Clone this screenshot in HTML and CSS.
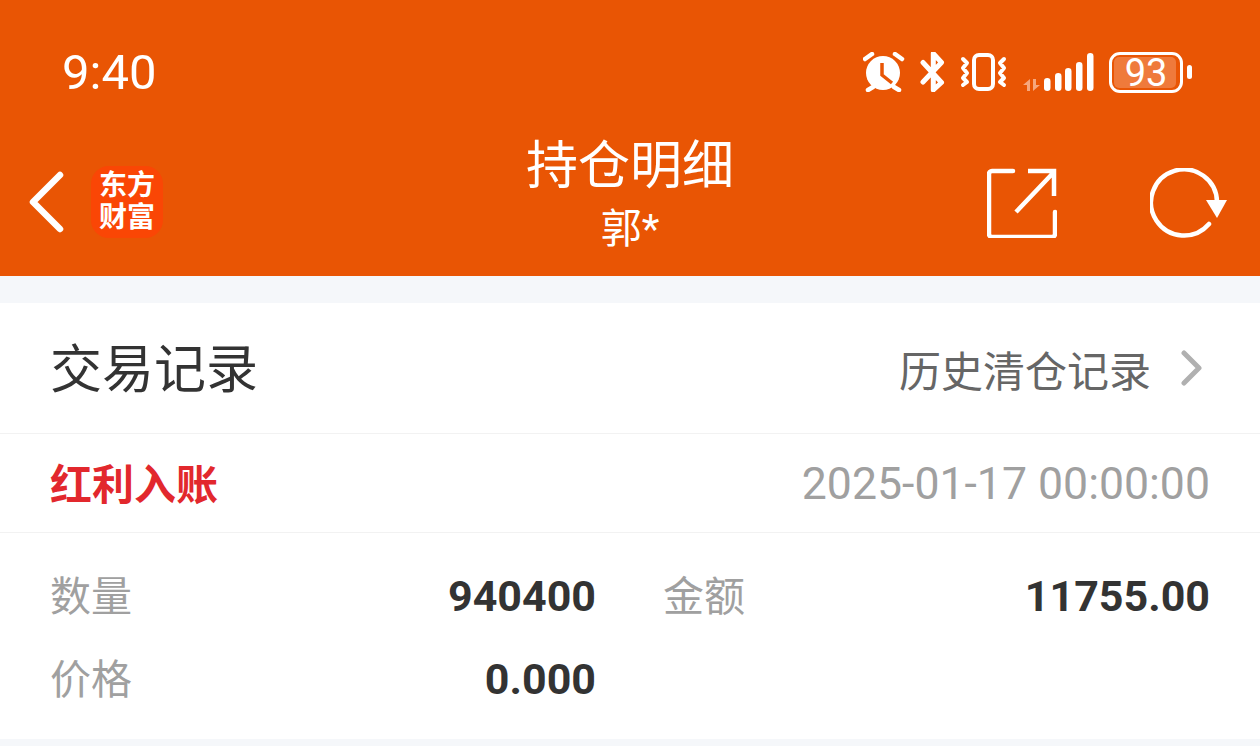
FILE: index.html
```html
<!DOCTYPE html>
<html lang="zh-CN">
<head>
  <meta charset="UTF-8" />
  <meta name="viewport" content="width=device-width, initial-scale=1.0"/>
  <title>持仓明细</title>
  <link rel="stylesheet" href="styles.css">
</head>
<body>
  <header class="top">
    <div class="status-bar">
      <span class="clock">9:40</span>
      <div class="status-icons">
        <!-- alarm -->
        <svg width="42" height="40" viewBox="0 0 42 40">
          <circle cx="20" cy="21" r="17" fill="#fff"/>
          <path d="M19 11v12l10 8" fill="none" stroke="#e95504" stroke-width="3.5"/>
          <path d="M2 7l7-5M32 2l7 5M5 38l5-3M31 35l5 3" fill="none" stroke="#fff" stroke-width="4.5" stroke-linecap="round"/>
        </svg>
        <!-- bluetooth -->
        <svg class="ic-bt" width="26" height="40" viewBox="0 0 26 40">
          <path d="M4 10.500 22.500 30.500 14.300 38V1.500L22.500 10.500 4 30" fill="none" stroke="#fff" stroke-width="5" stroke-linejoin="round" stroke-linecap="round"/>
        </svg>
        <!-- vibrate -->
        <svg class="ic-vib" width="48" height="40" viewBox="0 0 48 40">
          <rect x="14" y="3" width="19" height="34" rx="5" fill="none" stroke="#fff" stroke-width="4"/>
          <path d="M3 7l4 4-4 5 4 5-4 5 4 4-4 3M44 7l-4 4 4 5-4 5 4 5-4 4 4 3" fill="none" stroke="#fff" stroke-width="4" stroke-linejoin="round" stroke-linecap="round"/>
        </svg>
        <!-- signal -->
        <svg class="ic-signal" width="72" height="40" viewBox="0 0 72 40">
          <path d="M1 33 8 27V39H5V33zM11 27h3v6h4l-7 6z" fill="#f6a77d"/>
          <rect x="22" y="26" width="6.500" height="13" rx="3.200" fill="#fff"/>
          <rect x="33" y="21" width="6.500" height="18" rx="3.200" fill="#fff"/>
          <rect x="43" y="16" width="6.500" height="23" rx="3.200" fill="#fff"/>
          <rect x="54" y="10" width="6.500" height="29" rx="3.200" fill="#fff"/>
          <rect x="65" y="1" width="6.500" height="38" rx="3.200" fill="#fff"/>
        </svg>
        <div class="battery">
          <div class="battery-body">
            <div class="battery-fill"></div>
            <span class="battery-num">93</span>
          </div>
          <div class="battery-tip"></div>
        </div>
      </div>
    </div>
    <div class="nav">
      <div class="nav-left">
        <svg width="38" height="62" viewBox="0 0 38 62">
          <path d="M33 4 6 31l27 27" fill="none" stroke="#fff" stroke-width="6.500" stroke-linecap="round" stroke-linejoin="round"/>
        </svg>
        <div class="logo">东方<br>财富</div>
      </div>
      <div class="nav-title">
        <div class="title">持仓明细</div>
        <div class="subtitle">郭*</div>
      </div>
      <div class="nav-right">
        <svg width="70" height="70" viewBox="0 0 70 70">
          <path d="M26 3H5a3 3 0 0 0-3 3v60a3 3 0 0 0 3 3h60a3 3 0 0 0 3-3V44" fill="none" stroke="#fff" stroke-width="4.500" stroke-linecap="round"/>
          <path d="M41 3h26v25M67 4 29 44" fill="none" stroke="#fff" stroke-width="4.500"/>
        </svg>
        <svg width="78" height="70" viewBox="0 0 78 70">
          <path d="M59 56A33 33 0 1 1 67 34" fill="none" stroke="#fff" stroke-width="4.500" stroke-linecap="round"/>
          <path d="M56 32h21L67 50z" fill="#fff"/>
        </svg>
      </div>
    </div>
  </header>

  <div class="gap-top"></div>

  <main class="card">
    <div class="card-head">
      <span class="card-title">交易记录</span>
      <span class="history">
        历史清仓记录
        <svg width="22" height="36" viewBox="0 0 22 36">
          <path d="M3 3l15 15L3 33" fill="none" stroke="#b0b0b0" stroke-width="5" stroke-linecap="round" stroke-linejoin="round"/>
        </svg>
      </span>
    </div>
    <div class="record-head">
      <span class="record-type">红利入账</span>
      <span class="record-time">2025-01-17 00:00:00</span>
    </div>
    <div class="record-body">
      <div class="field"><span class="label">数量</span><span class="value">940400</span></div>
      <div class="field"><span class="label">金额</span><span class="value">11755.00</span></div>
      <div class="field"><span class="label">价格</span><span class="value">0.000</span></div>
    </div>
  </main>

  <div class="gap-bottom"></div>
</body>
</html>
```

FILE: styles.css
```css
/* Basic resets & layout */
html, body {
  margin: 0;
  padding: 0;
  background: #fff;
}

body {
  font-family: Roboto, "Noto Sans CJK SC", sans-serif;
  color: #333;
  height: 753px;
  overflow: hidden;
}

.top {
  background: #e95504;
  color: #fff;
  height: 276px;
  box-sizing: border-box;
}

.status-bar {
  height: 130px;
  padding: 14px 68px 0 62px;
  box-sizing: border-box;
  display: flex;
  align-items: center;
  justify-content: space-between;
}

.clock {
  font-size: 49px;
  line-height: 1;
}

.status-icons {
  display: flex;
  align-items: center;
}

.ic-bt { margin-left: 14px; }
.ic-vib { margin-left: 15px; }
.ic-signal { margin-left: 14px; }

.battery {
  display: flex;
  align-items: center;
  margin-left: 15px;
}

.battery-body {
  position: relative;
  width: 74px;
  height: 41px;
  box-sizing: border-box;
  border: 3.5px solid #fff;
  border-radius: 11px;
  display: flex;
  align-items: center;
  justify-content: center;
}

.battery-fill {
  position: absolute;
  left: 2px;
  top: 2px;
  bottom: 2px;
  right: 4px;
  border-radius: 5px;
  background: #ef7a3b;
}

.battery-num {
  position: relative;
  font-size: 38px;
  line-height: 32px;
  padding-top: 2px;
}

.battery-tip {
  width: 5px;
  height: 14px;
  margin-left: 4px;
  background: #fff;
  border-radius: 3px;
}

.nav {
  height: 146px;
  position: relative;
  display: flex;
  align-items: flex-start;
  justify-content: space-between;
}

.nav-left {
  display: flex;
  align-items: center;
  padding: 36px 0 0 27px;
}

.logo {
  width: 72px;
  height: 72px;
  margin-left: 26px;
  border-radius: 18px;
  background: #fa4605;
  font-size: 28px;
  font-weight: 700;
  line-height: 32px;
  text-align: center;
  padding-top: 4px;
  box-sizing: border-box;
}

.nav-title {
  position: absolute;
  left: 0;
  right: 0;
  top: 6px;
  text-align: center;
}

.title {
  font-size: 52px;
  line-height: 62px;
}

.subtitle {
  font-size: 41px;
  line-height: 62px;
}

.nav-right {
  display: flex;
  align-items: center;
  gap: 93px;
  padding: 38px 32px 0 0;
}

.gap-top {
  height: 27px;
  background: #f5f7fa;
}

.card-head {
  height: 130px;
  padding: 0 57px 0 50px;
  border-bottom: 1px solid #f2f2f2;
  display: flex;
  align-items: center;
  justify-content: space-between;
}

.card-title {
  font-size: 52px;
  margin-bottom: 6px;
}

.history {
  font-size: 42px;
  color: #666;
  display: flex;
  align-items: center;
  gap: 30px;
}

.record-head {
  height: 98px;
  padding: 0 50px;
  border-bottom: 1px solid #f2f2f2;
  display: flex;
  align-items: center;
  justify-content: space-between;
}

.record-type {
  font-size: 42px;
  font-weight: 700;
  color: #e2282d;
  margin-bottom: 4px;
}

.record-time {
  font-size: 44.600px;
  color: #a0a0a0;
  margin-top: 2px;
}

.record-body {
  height: 206px;
  box-sizing: border-box;
  padding: 22px 50px 0;
  display: grid;
  grid-template-columns: 546px 547px;
  grid-auto-rows: 83px;
  column-gap: 67px;
}

.field {
  display: flex;
  align-items: center;
  justify-content: space-between;
}

.label {
  font-size: 41px;
  color: #a0a0a0;
  margin-bottom: 7px;
}

.value {
  font-size: 43px;
  font-weight: 700;
  margin-bottom: 2px;
  color: #333;
}

.gap-bottom {
  height: 7px;
  background: #f5f7fa;
}
```
